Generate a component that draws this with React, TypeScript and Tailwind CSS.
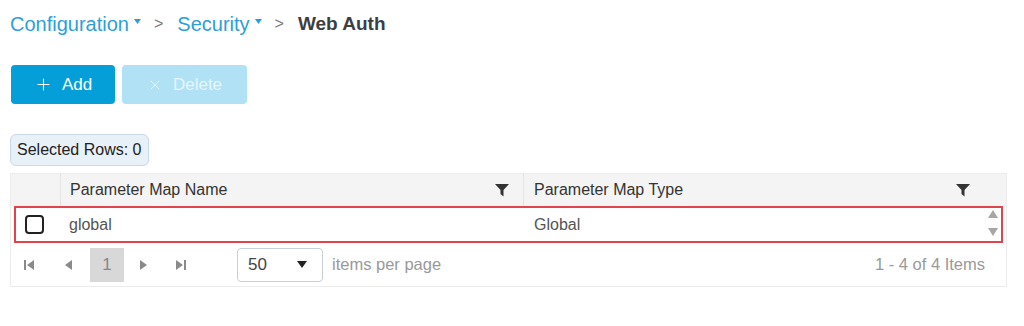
import { Plus, X } from "lucide-react";

const Caret = () => (
  <svg width="7" height="5" viewBox="0 0 7 5" className="ml-[5px] mb-[6px]">
    <path d="M0 0h7L3.5 5z" fill="currentColor" />
  </svg>
);

const Funnel = () => (
  <svg width="14" height="14" viewBox="0 0 14 14">
    <path d="M0 1h14L8.5 7v6.5L5.5 11V7z" fill="#333" />
  </svg>
);

const PagerIcon = ({ d }: { d: string }) => (
  <svg width="10" height="12" viewBox="0 0 10 12">
    <path d={d} fill="#8a8a8a" />
  </svg>
);

export default function App() {
  return (
    <div
      className="w-[1024px] h-[326px] bg-white pl-[10px] pr-[17px] pt-[12px]"
      style={{ fontFamily: '"Liberation Sans", Arial, sans-serif' }}
    >
      {/* Breadcrumb */}
      <div className="flex items-center text-[20px] leading-[24px] h-[24px]">
        <span className="text-[#2d9fd8]">Configuration</span>
        <span className="text-[#2d9fd8]"><Caret /></span>
        <span className="text-[#777] ml-[13px] mr-[14px] text-[16px]">&gt;</span>
        <span className="text-[#2d9fd8]">Security</span>
        <span className="text-[#2d9fd8]"><Caret /></span>
        <span className="text-[#777] ml-[13px] mr-[14px] text-[16px]">&gt;</span>
        <span className="text-[#3b3f44] font-bold text-[19px]">Web Auth</span>
      </div>

      {/* Buttons */}
      <div className="flex gap-[7px] mt-[29px] ml-px">
        <button className="h-[39px] w-[104px] rounded-[4px] bg-[#049fd9] text-white text-[17px] flex items-center justify-center gap-[9px]">
          <Plus size={19} strokeWidth={1.4} />
          Add
        </button>
        <button className="h-[39px] w-[125px] rounded-[4px] bg-[#b1e1f5] text-[#e6f6fc] text-[17px] flex items-center justify-center gap-[10px]">
          <X size={16} strokeWidth={1.4} />
          Delete
        </button>
      </div>

      {/* Selected rows chip */}
      <div className="mt-[30px] inline-flex items-center h-[32px] px-[6px] rounded-[6px] bg-[#e9f1f8] border border-[#c9d9e8] text-[16px] text-[#222]">
        Selected Rows: 0
      </div>

      {/* Table */}
      <div className="mt-[7px] border border-[#ececec]">
        <div className="flex h-[32px] bg-[#f4f4f4] text-[16px] text-[#333]">
          <div className="w-[50px] border-r border-[#e3e3e3]" />
          <div className="w-[463px] flex items-center justify-between pl-[9px] pr-[14px] border-r border-[#e3e3e3]">
            <span>Parameter Map Name</span>
            <Funnel />
          </div>
          <div className="flex-1 flex items-center justify-between pl-[10px] pr-[36px]">
            <span>Parameter Map Type</span>
            <Funnel />
          </div>
        </div>
        <div className="mx-[3px] h-[37px] border-2 border-[#e0444c] flex items-center text-[16px] text-[#555] relative">
          <div className="w-[45px] pl-[9px]">
            <div className="w-[19px] h-[19px] border-2 border-[#222] rounded-[4px]" />
          </div>
          <div className="w-[463px] pl-[8px]">global</div>
          <div className="flex-1 pl-[10px]">Global</div>
          <div className="absolute right-[3px] top-[2px] flex flex-col gap-[10px]">
            <svg width="10" height="8" viewBox="0 0 10 8">
              <path d="M5 0l5 8H0z" fill="#a6a6a6" />
            </svg>
            <svg width="10" height="8" viewBox="0 0 10 8">
              <path d="M0 0h10L5 8z" fill="#a6a6a6" />
            </svg>
          </div>
        </div>
        <div className="flex items-center h-[43px] text-[16px]">
          <div className="flex items-center ml-[1px]">
            <div className="w-[34px] flex justify-center">
              <PagerIcon d="M0 1h2v10H0zM10 1v10L3 6z" />
            </div>
            <div className="w-[44px] flex justify-center">
              <PagerIcon d="M9 1v10L2 6z" />
            </div>
            <div className="w-[34px] h-[34px] bg-[#d8d8d8] flex items-center justify-center text-[#888] text-[17px]">
              1
            </div>
            <div className="w-[40px] flex justify-center">
              <PagerIcon d="M1 1v10L8 6z" />
            </div>
            <div className="w-[34px] flex justify-center">
              <PagerIcon d="M0 1v10L7 6zM8 1h2v10H8z" />
            </div>
          </div>
          <div className="ml-[39px] w-[86px] h-[34px] border border-[#c5d0da] rounded-[4px] flex items-center justify-between pl-[10px] pr-[15px] text-[17px] text-[#444]">
            <span>50</span>
            <svg width="10" height="7" viewBox="0 0 10 7">
              <path d="M0 0h10L5 7z" fill="#222" />
            </svg>
          </div>
          <span className="ml-[9px] text-[#999] text-[16.5px]">items per page</span>
          <span className="ml-auto mr-[21px] text-[#999] text-[16.5px]">1 - 4 of 4 Items</span>
        </div>
      </div>
    </div>
  );
}
